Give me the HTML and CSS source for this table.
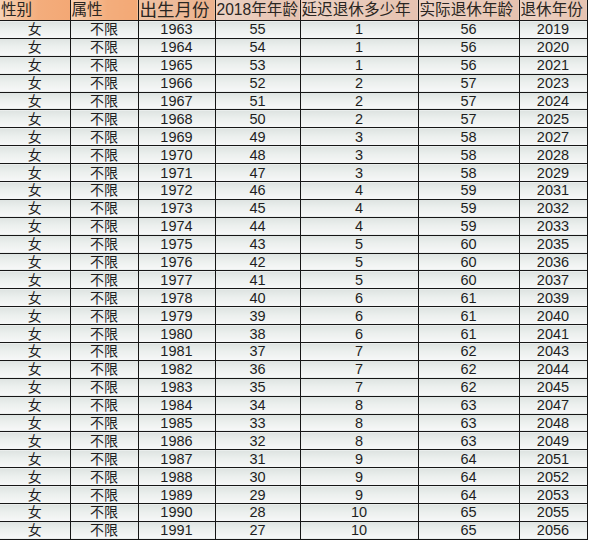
FILE: index.html
```html
<!DOCTYPE html>
<html lang="zh-CN">
<head>
<meta charset="utf-8">
<title>退休年龄表</title>
<link rel="stylesheet" href="styles.css">
</head>
<body>
<table class="sheet">
  <colgroup>
    <col class="c1"><col class="c2"><col class="c3"><col class="c4"><col class="c5"><col class="c6"><col class="c7">
  </colgroup>
  <thead>
    <tr>
      <th class="h-orange">性别</th>
      <th class="h-orange">属性</th>
      <th class="h-peach big">出生月份</th>
      <th class="h-pink">2018年年龄</th>
      <th class="h-pink">延迟退休多少年</th>
      <th class="h-pink">实际退休年龄</th>
      <th class="h-pink">退休年份</th>
    </tr>
  </thead>
  <tbody>
    <tr><td>女</td><td>不限</td><td>1963</td><td>55</td><td>1</td><td>56</td><td>2019</td></tr>
    <tr><td>女</td><td>不限</td><td>1964</td><td>54</td><td>1</td><td>56</td><td>2020</td></tr>
    <tr><td>女</td><td>不限</td><td>1965</td><td>53</td><td>1</td><td>56</td><td>2021</td></tr>
    <tr><td>女</td><td>不限</td><td>1966</td><td>52</td><td>2</td><td>57</td><td>2023</td></tr>
    <tr><td>女</td><td>不限</td><td>1967</td><td>51</td><td>2</td><td>57</td><td>2024</td></tr>
    <tr><td>女</td><td>不限</td><td>1968</td><td>50</td><td>2</td><td>57</td><td>2025</td></tr>
    <tr><td>女</td><td>不限</td><td>1969</td><td>49</td><td>3</td><td>58</td><td>2027</td></tr>
    <tr><td>女</td><td>不限</td><td>1970</td><td>48</td><td>3</td><td>58</td><td>2028</td></tr>
    <tr><td>女</td><td>不限</td><td>1971</td><td>47</td><td>3</td><td>58</td><td>2029</td></tr>
    <tr><td>女</td><td>不限</td><td>1972</td><td>46</td><td>4</td><td>59</td><td>2031</td></tr>
    <tr><td>女</td><td>不限</td><td>1973</td><td>45</td><td>4</td><td>59</td><td>2032</td></tr>
    <tr><td>女</td><td>不限</td><td>1974</td><td>44</td><td>4</td><td>59</td><td>2033</td></tr>
    <tr><td>女</td><td>不限</td><td>1975</td><td>43</td><td>5</td><td>60</td><td>2035</td></tr>
    <tr><td>女</td><td>不限</td><td>1976</td><td>42</td><td>5</td><td>60</td><td>2036</td></tr>
    <tr><td>女</td><td>不限</td><td>1977</td><td>41</td><td>5</td><td>60</td><td>2037</td></tr>
    <tr><td>女</td><td>不限</td><td>1978</td><td>40</td><td>6</td><td>61</td><td>2039</td></tr>
    <tr><td>女</td><td>不限</td><td>1979</td><td>39</td><td>6</td><td>61</td><td>2040</td></tr>
    <tr><td>女</td><td>不限</td><td>1980</td><td>38</td><td>6</td><td>61</td><td>2041</td></tr>
    <tr><td>女</td><td>不限</td><td>1981</td><td>37</td><td>7</td><td>62</td><td>2043</td></tr>
    <tr><td>女</td><td>不限</td><td>1982</td><td>36</td><td>7</td><td>62</td><td>2044</td></tr>
    <tr><td>女</td><td>不限</td><td>1983</td><td>35</td><td>7</td><td>62</td><td>2045</td></tr>
    <tr><td>女</td><td>不限</td><td>1984</td><td>34</td><td>8</td><td>63</td><td>2047</td></tr>
    <tr><td>女</td><td>不限</td><td>1985</td><td>33</td><td>8</td><td>63</td><td>2048</td></tr>
    <tr><td>女</td><td>不限</td><td>1986</td><td>32</td><td>8</td><td>63</td><td>2049</td></tr>
    <tr><td>女</td><td>不限</td><td>1987</td><td>31</td><td>9</td><td>64</td><td>2051</td></tr>
    <tr><td>女</td><td>不限</td><td>1988</td><td>30</td><td>9</td><td>64</td><td>2052</td></tr>
    <tr><td>女</td><td>不限</td><td>1989</td><td>29</td><td>9</td><td>64</td><td>2053</td></tr>
    <tr><td>女</td><td>不限</td><td>1990</td><td>28</td><td>10</td><td>65</td><td>2055</td></tr>
    <tr><td>女</td><td>不限</td><td>1991</td><td>27</td><td>10</td><td>65</td><td>2056</td></tr>
  </tbody>
</table>
</body>
</html>
```
FILE: styles.css
```css
html, body {
  margin: 0;
  padding: 0;
  background: #ffffff;
}

.sheet {
  border-collapse: collapse;
  table-layout: fixed;
  width: 587px;
  font-family: "Liberation Sans", "Noto Sans CJK SC", sans-serif;
  color: #1e1e1e;
}

.c1 { width: 70px; }
.c2 { width: 68px; }
.c3 { width: 77px; }
.c4 { width: 85px; }
.c5 { width: 118px; }
.c6 { width: 101px; }
.c7 { width: 68px; }

.sheet th,
.sheet td {
  border: 1px solid #161616;
  padding: 0;
  overflow: hidden;
  white-space: nowrap;
}

.sheet tr > :first-child {
  border-left: none;
}

.sheet thead th {
  border-top: none;
  height: 20px;
  font-weight: normal;
  font-size: 15.6px;
  line-height: 20px;
  text-align: left;
  padding-left: 1px;
  color: #2a2622;
}

.sheet thead th.big {
  font-size: 17.5px;
}

.h-orange {
  background: linear-gradient(to right, #f7d2b5 0%, #f3ad7c 55%, #f3a875 100%);
}

.h-peach {
  background: linear-gradient(to right, #efc3a4 0%, #ebb18d 100%);
}

.h-pink {
  background: linear-gradient(to right, #ecd2c4 0%, #e6c2b0 100%);
}

.sheet tbody td {
  height: 16.9px;
  font-size: 14.5px;
  line-height: 16px;
  text-align: center;
  background: linear-gradient(to bottom, #dde3e1 0%, #ebefed 45%, #f7f8f8 100%);
}

.sheet tbody td:nth-child(-n+2) {
  font-size: 14px;
}
```
